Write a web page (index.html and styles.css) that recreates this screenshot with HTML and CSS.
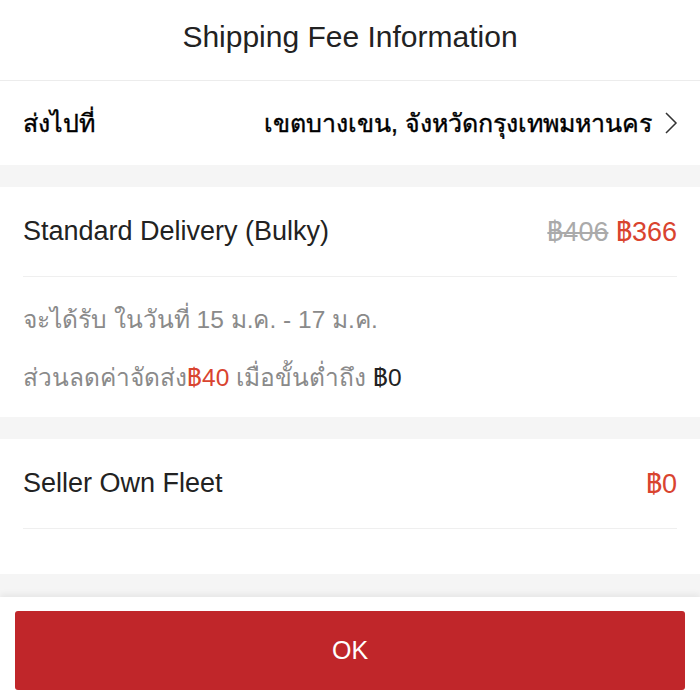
FILE: index.html
```html
<!DOCTYPE html>
<html lang="th">
<head>
<meta charset="utf-8">
<link rel="stylesheet" href="styles.css">
</head>
<body>
<div class="sheet">
  <header class="title">Shipping Fee Information</header>
  <div class="dest">
    <span class="dest-label">ส่งไปที่</span>
    <span class="dest-value">เขตบางเขน, จังหวัดกรุงเทพมหานคร
      <svg class="chev" width="14" height="24" viewBox="0 0 14 24"><path d="M2 2 L12 12 L2 22" fill="none" stroke="#333" stroke-width="1.5"/></svg>
    </span>
  </div>
  <div class="gap"></div>
  <section class="block">
    <div class="row">
      <span class="name">Standard Delivery (Bulky)</span>
      <span class="price"><s class="old">฿406</s> <span class="red">฿366</span></span>
    </div>
    <div class="details">
      <p class="line">จะได้รับ ในวันที่ 15 ม.ค. - 17 ม.ค.</p>
      <p class="line">ส่วนลดค่าจัดส่ง<span class="red">฿40</span> เมื่อขั้นต่ำถึง <span class="dark">฿0</span></p>
    </div>
  </section>
  <div class="gap"></div>
  <section class="block">
    <div class="row">
      <span class="name">Seller Own Fleet</span>
      <span class="price red">฿0</span>
    </div>
    <div class="empty"></div>
  </section>
  <div class="rest"></div>
  <footer class="footer">
    <button class="ok">OK</button>
  </footer>
</div>
</body>
</html>
```
FILE: styles.css
```css
* { box-sizing: border-box; }
html, body { margin: 0; padding: 0; }
body {
  font-family: "Liberation Sans", "Noto Sans", sans-serif;
  color: #222;
  background: #f5f5f5;
  width: 700px;
  height: 700px;
  overflow: hidden;
}
.sheet { display: flex; flex-direction: column; height: 700px; }
.title {
  height: 81px;
  background: #fff;
  border-bottom: 1px solid #ececec;
  display: flex;
  align-items: center;
  justify-content: center;
  font-size: 30px;
  color: #222;
  padding-bottom: 6px;
}
.dest {
  height: 84px;
  background: #fff;
  display: flex;
  align-items: center;
  justify-content: space-between;
  padding: 0 22px 0 23px;
  font-size: 25px;
  font-weight: normal;
  color: #000;
  -webkit-text-stroke: 0.4px #000;
}
.dest-value { display: flex; align-items: center; gap: 12px; }
.chev { display: block; }
.gap { height: 22px; background: #f5f5f5; }
.block { background: #fff; padding: 0 23px; }
.row {
  height: 90px;
  display: flex;
  align-items: center;
  justify-content: space-between;
  border-bottom: 1px solid #efefef;
  font-size: 27px;
  color: #222;
}
.price { font-size: 27px; }
.old { color: #aaa; text-decoration: line-through; }
.red { color: #d9442f; }
.dark { color: #222; }
.details {
  padding: 29px 0 25px;
  display: flex;
  flex-direction: column;
  gap: 30px;
}
.line { margin: 0; font-size: 24.5px; color: #8a8a8a; line-height: 28px; white-space: nowrap; }
.empty { height: 45px; }
.rest { flex: 1; background: #f5f5f5; }
.footer {
  height: 103px;
  background: #fff;
  box-shadow: 0 -3px 6px rgba(0,0,0,0.06);
  padding: 14px 15px 10px;
}
.ok {
  width: 100%;
  height: 79px;
  background: #c0262a;
  color: #fff;
  border: none;
  border-radius: 3px;
  font-family: "Liberation Sans", sans-serif;
  font-size: 25px;
}
```
